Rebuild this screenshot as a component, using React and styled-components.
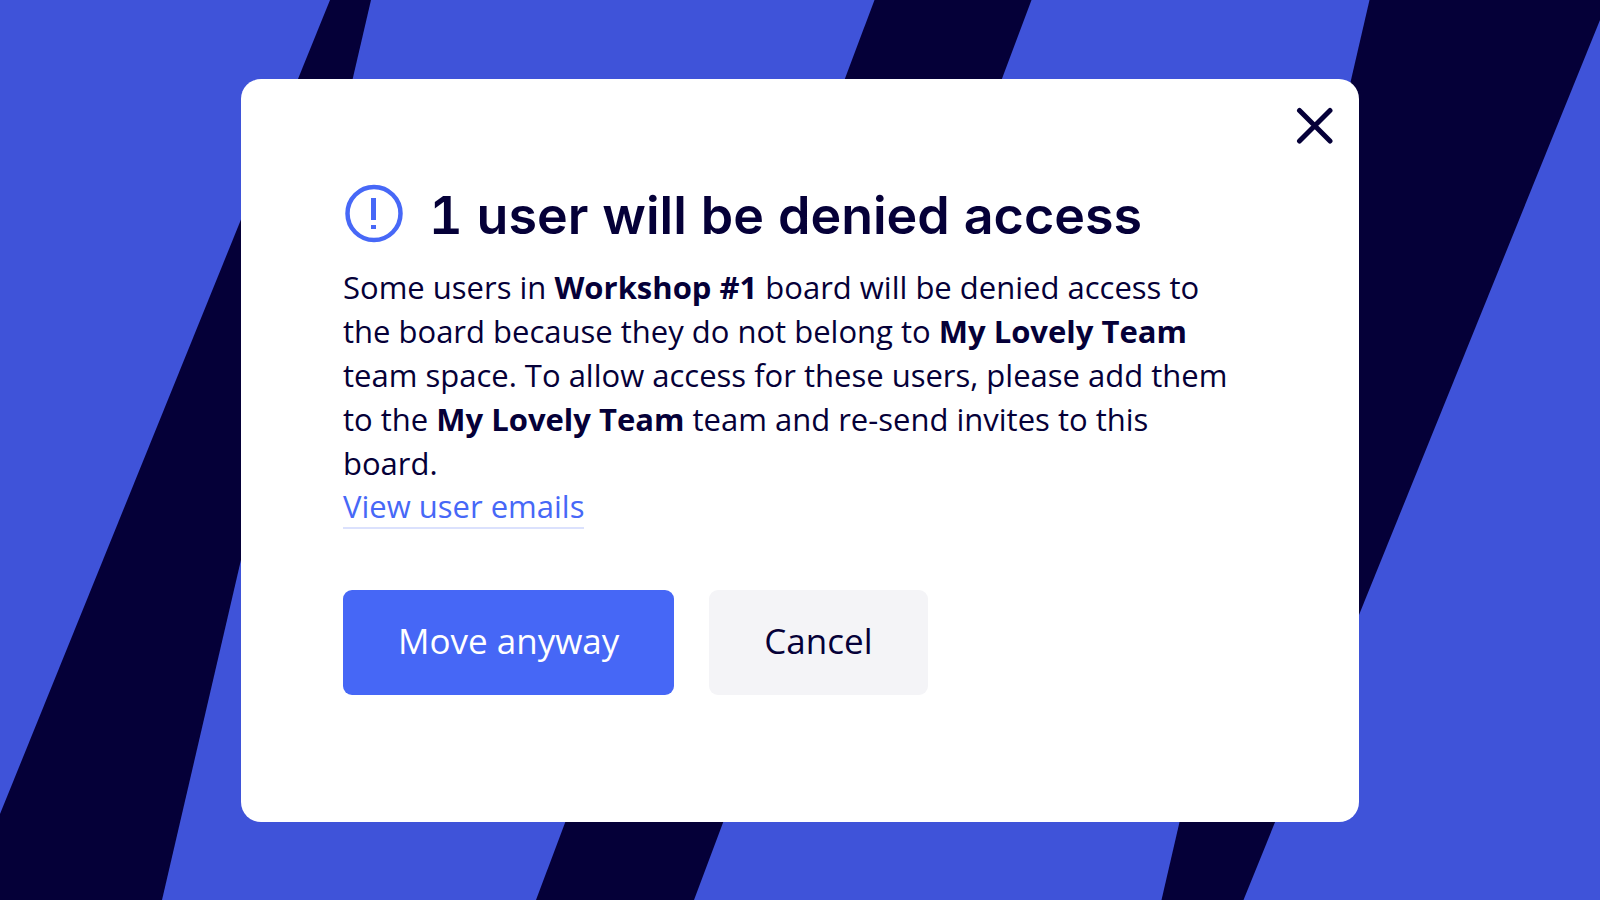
import React from 'react';
import styled, { createGlobalStyle } from 'styled-components';

const GlobalStyle = createGlobalStyle`
  * {
    box-sizing: border-box;
  }
  body {
    margin: 0;
    color: #050038;
    font-family: 'Open Sans', 'Noto Sans', sans-serif;
  }
`;

const Page = styled.main`
  position: relative;
  display: grid;
  justify-items: center;
  align-items: center;
  min-height: 100vh;
  padding: 40px 241px;
  background: #3f53d9;
  overflow: hidden;
`;

const Backdrop = styled.svg`
  position: absolute;
  inset: 0;
  width: 100%;
  height: 100%;
  fill: #050038;
`;

const Dialog = styled.section`
  position: relative;
  width: 100%;
  padding: 103px 102px 127px;
  border-radius: 20px;
  background: #fff;
`;

const CloseButton = styled.button`
  position: absolute;
  top: 28px;
  right: 24px;
  display: flex;
  padding: 0;
  border: none;
  background: none;
  color: inherit;
  cursor: pointer;
`;

const Header = styled.header`
  display: flex;
  align-items: flex-start;
  gap: 24px;
`;

// tabular figures give the leading "1" its foot
const Title = styled.h1`
  margin: 0;
  font-family: Inter, 'Liberation Sans', sans-serif;
  font-size: 52px;
  font-weight: 600;
  font-variant-numeric: tabular-nums;
  line-height: 68px;
`;

const Message = styled.p`
  max-width: 890px;
  margin: 15px 0 0;
  font-size: 31px;
  line-height: 44px;
`;

const EmailsLink = styled.a`
  display: inline-block;
  border-bottom: 2px solid #dbe1fd;
  color: #4768f7;
  font-size: 31px;
  line-height: 42px;
  text-decoration: none;
`;

const Actions = styled.footer`
  display: flex;
  flex-wrap: wrap;
  gap: 35px;
  margin-top: 61px;
`;

const ActionButton = styled.button`
  padding: 26px 55px 30px;
  border: none;
  border-radius: 9px;
  background: ${(props) => (props.$primary ? '#4667f6' : '#f4f4f7')};
  color: ${(props) => (props.$primary ? '#fff' : '#050038')};
  font-family: inherit;
  font-size: 35px;
  line-height: 49px;
  cursor: pointer;
`;

const Stripes = () => (
  <Backdrop viewBox="0 0 1600 900" preserveAspectRatio="none" aria-hidden="true">
    <path d="M330 0H371L162 900H0V814Z" />
    <path d="M874.5 0H1031.5L694 900H536Z" />
    <path d="M1369.5 0H1600V20L1243.5 900H1161.5Z" />
  </Backdrop>
);

const AlertIcon = () => (
  <svg width="62" height="62" viewBox="0 0 62 62" fill="none" aria-hidden="true">
    <circle cx="31" cy="31.5" r="26.5" stroke="#4768f7" strokeWidth="4.5" />
    <path d="M30.5 16V38M30.5 43V47" stroke="#4768f7" strokeWidth="5" />
  </svg>
);

const CloseIcon = () => (
  <svg width="40" height="40" viewBox="0 0 40 40" fill="none" aria-hidden="true">
    <path
      d="M4.5 3.5L35 34M35 3.5L4.5 34"
      stroke="currentColor"
      strokeWidth="5"
      strokeLinecap="round"
    />
  </svg>
);

export default function App() {
  return (
    <>
      <GlobalStyle />
      <Page>
        <Stripes />
        <Dialog role="dialog" aria-labelledby="dialog-title">
          <CloseButton type="button" aria-label="Close">
            <CloseIcon />
          </CloseButton>
          <Header>
            <AlertIcon />
            <Title id="dialog-title">1 user will be denied access</Title>
          </Header>
          <Message>
            Some users in <b>Workshop #1</b> board will be denied access to the
            board because they do not belong to <b>My Lovely Team</b> team
            space. To allow access for these users, please add them to the{' '}
            <b>My Lovely Team</b> team and re-send invites to this board.
          </Message>
          <EmailsLink href="#emails">View user emails</EmailsLink>
          <Actions>
            <ActionButton type="button" $primary>
              Move anyway
            </ActionButton>
            <ActionButton type="button">Cancel</ActionButton>
          </Actions>
        </Dialog>
      </Page>
    </>
  );
}
